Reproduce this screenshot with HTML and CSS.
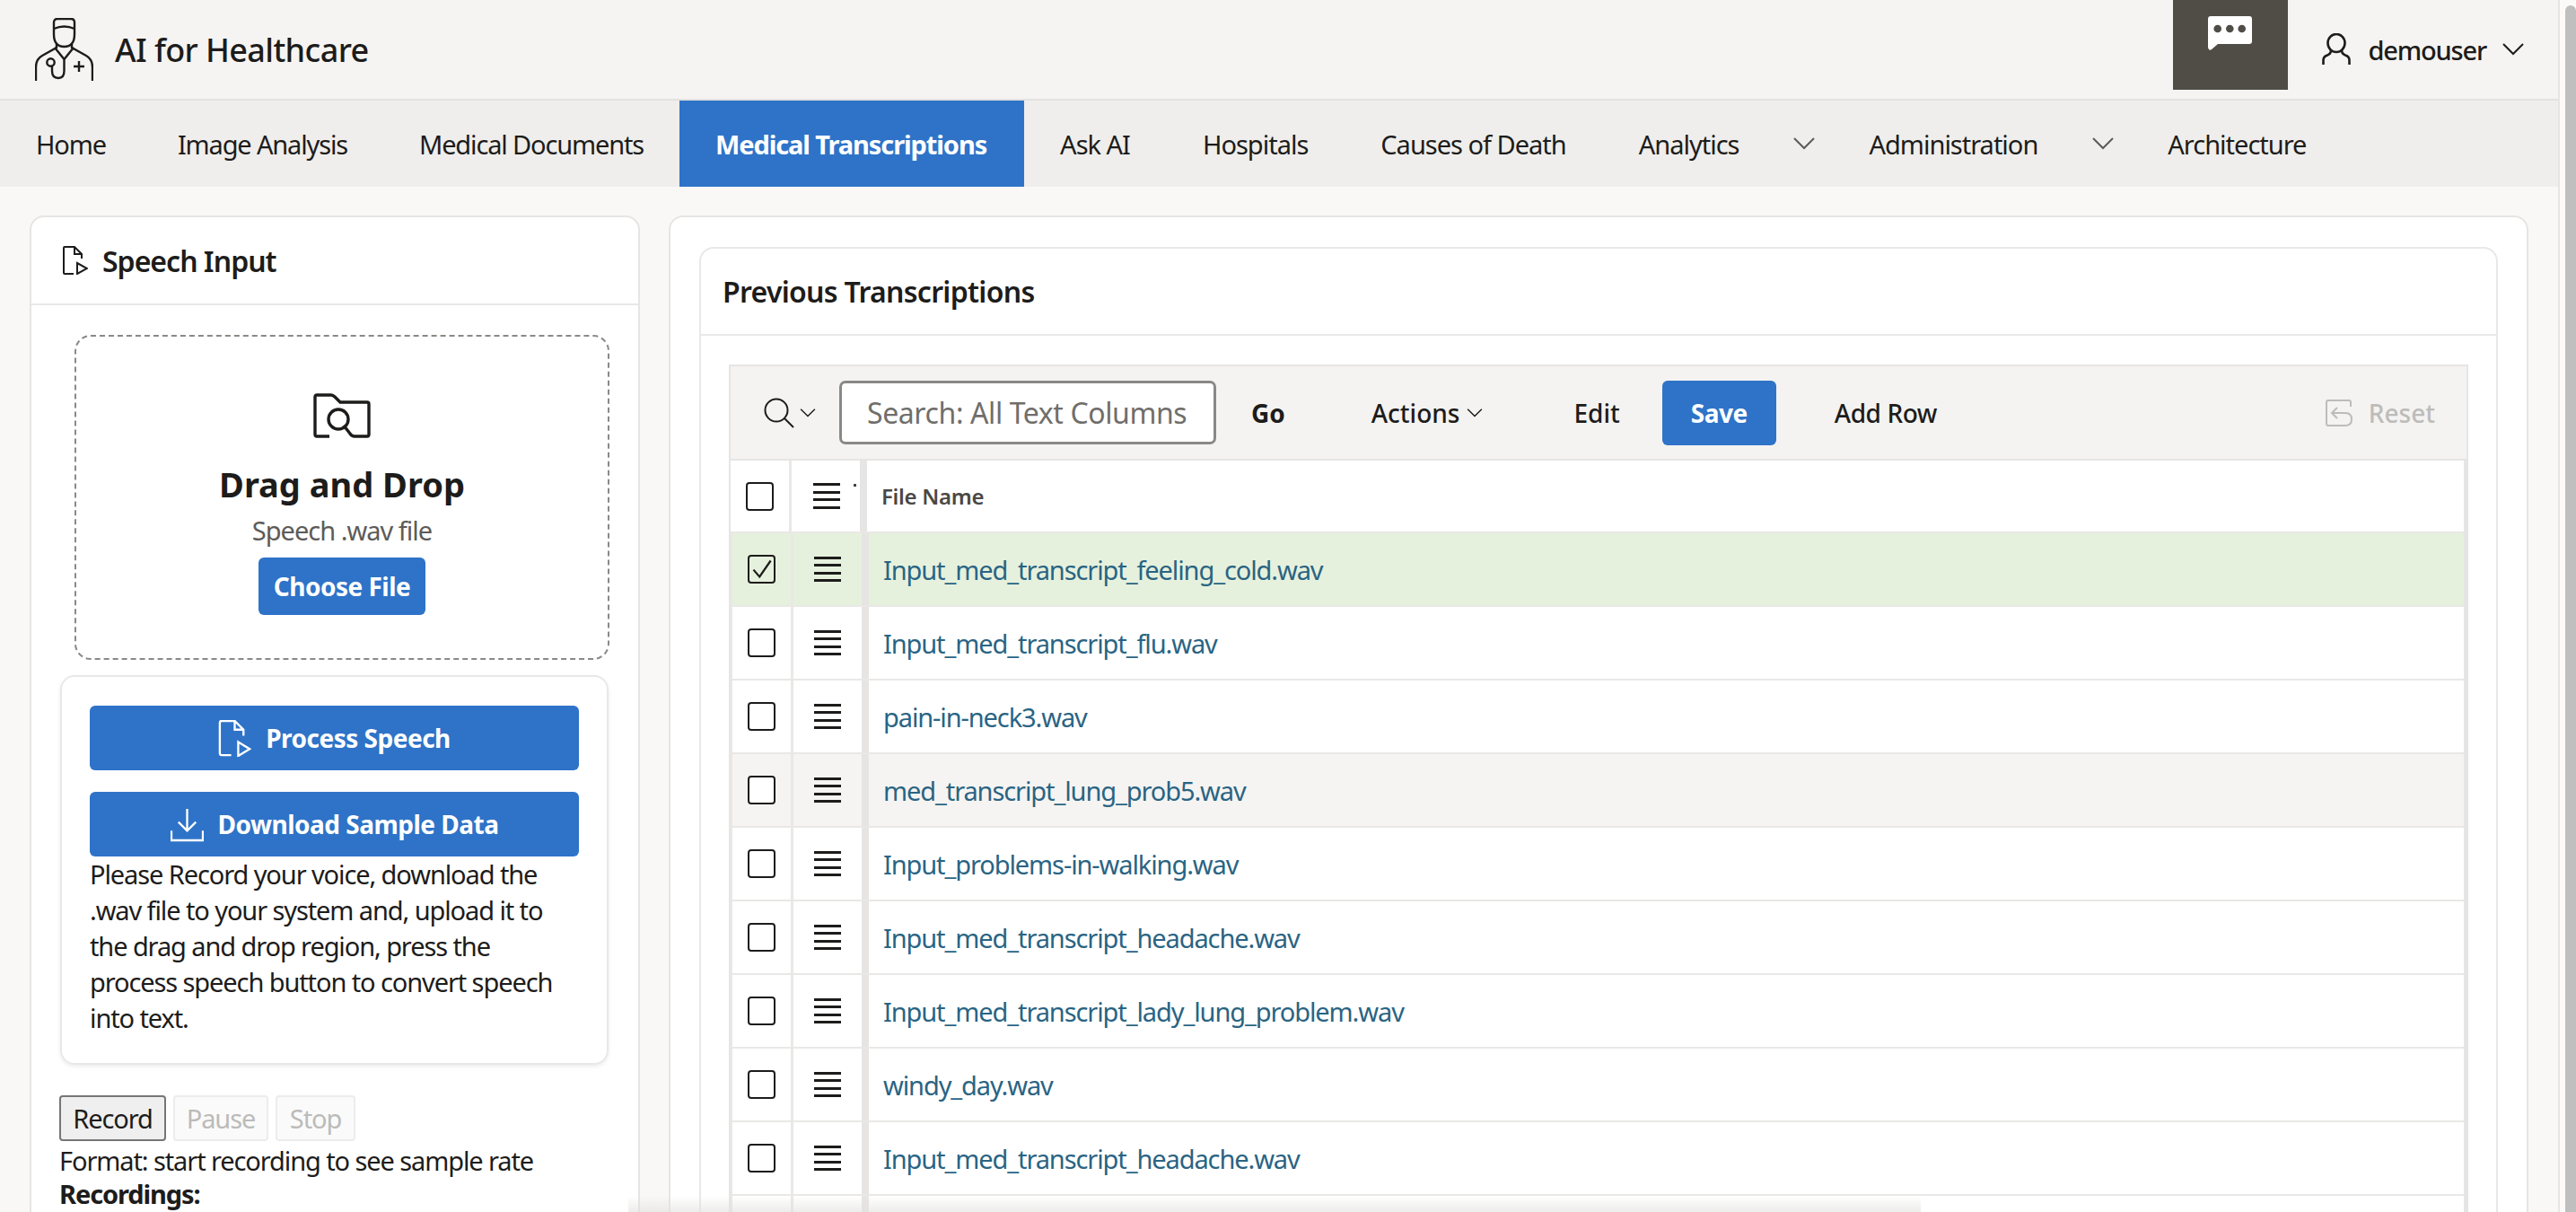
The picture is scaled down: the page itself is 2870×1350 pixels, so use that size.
FILE: index.html
```html
<!DOCTYPE html>
<html lang="en">
<head>
    <meta charset="UTF-8">
    <meta name="viewport" content="width=device-width, initial-scale=1.0">
    <title>AI for Healthcare</title>
    <link rel="stylesheet" href="styles.css">
</head>
<body>
    <div class="page">
        <div class="main">
            <header class="top-bar">
                <div class="brand">
                    <svg class="logo" viewBox="0 0 65 70" fill="none" stroke="#1d1c1b" stroke-width="2.4">
                        <path d="M21 14V5Q21 1 25 1H40Q44 1 44 5V14"/>
                        <path d="M21 12Q32.5 7 44 12M21 14V18Q21 32 32.5 32Q44 32 44 18V14"/>
                        <path d="M24 29V33L8 42Q1 46 1 55V70M41 29V33L57 42Q64 46 64 55V70"/>
                        <path d="M22 33L32.5 46L43 33M32.5 46V59Q32.5 67 26 67Q19 67 19 59V54"/>
                        <circle cx="17.5" cy="49.5" r="4.2"/>
                        <path d="M49 48V60M43 54H55"/>
                    </svg>
                    <span class="brand-name">AI for Healthcare</span>
                </div>
                <div class="top-actions">
                    <div class="chat-btn">
                        <svg viewBox="0 0 49 38" class="chat-icon">
                            <path d="M3 0H46Q49 0 49 3V28Q49 31 46 31H11L4 37Q1 39 0 35V3Q0 0 3 0Z" fill="#fff"/>
                            <circle cx="10.7" cy="14" r="4.3" fill="#504d47"/>
                            <circle cx="24.3" cy="14" r="4.3" fill="#504d47"/>
                            <circle cx="37.7" cy="14" r="4.3" fill="#504d47"/>
                        </svg>
                    </div>
                    <div class="user-menu">
                        <svg class="user-icon" viewBox="0 0 32 36" fill="none" stroke="#1d1c1b" stroke-width="2.6">
                            <ellipse cx="16" cy="11" rx="9.5" ry="10"/>
                            <path d="M10 19Q10 23 6 24.5Q1.5 26 1.5 30V35M22 19Q22 23 26 24.5Q30.5 26 30.5 30V35"/>
                        </svg>
                        <span class="user-name">demouser</span>
                        <svg class="chevron chevron-user" viewBox="0 0 24 14"><path d="M1 1L12 12L23 1"/></svg>
                    </div>
                </div>
            </header>

            <nav class="nav-bar">
                <a class="nav-item">Home</a>
                <a class="nav-item">Image Analysis</a>
                <a class="nav-item">Medical Documents</a>
                <a class="nav-item active">Medical Transcriptions</a>
                <a class="nav-item">Ask AI</a>
                <a class="nav-item">Hospitals</a>
                <a class="nav-item">Causes of Death</a>
                <a class="nav-item has-menu">Analytics</a>
                <span class="nav-toggle"><svg class="chevron" viewBox="0 0 24 14"><path d="M1 1L12 12L23 1"/></svg></span>
                <a class="nav-item has-menu">Administration</a>
                <span class="nav-toggle"><svg class="chevron" viewBox="0 0 24 14"><path d="M1 1L12 12L23 1"/></svg></span>
                <a class="nav-item">Architecture</a>
            </nav>

            <div class="content">
                <section class="card side-card">
                    <div class="side-head">
                        <svg class="file-play dark" viewBox="0 0 28 32" fill="none" stroke="currentColor" stroke-width="2">
                            <path d="M12 31H2Q1 31 1 30V2Q1 1 2 1H13L21 9V14M13 1V9H21"/>
                            <path d="M16 19L27 25L16 31Z"/>
                        </svg>
                        <h2>Speech Input</h2>
                    </div>
                    <div class="side-body">
                        <div class="drop-zone">
                            <svg class="folder-icon" viewBox="0 0 64 50" fill="none" stroke="#1d1c1b" stroke-width="3.4">
                                <path d="M18 48H4Q2 48 2 46V4Q2 2 4 2H20Q22 2 24 4L30 10H60Q62 10 62 12V46Q62 48 60 48H46Q43 48 41 45L34 36"/>
                                <circle cx="28" cy="29" r="11"/>
                            </svg>
                            <div class="drop-title">Drag and Drop</div>
                            <div class="drop-sub">Speech .wav file</div>
                            <button class="btn btn-primary choose-btn">Choose File</button>
                        </div>
                        <div class="process-box">
                            <button class="btn btn-primary wide-btn">
                                <svg class="btn-icon" viewBox="0 0 36 42" fill="none" stroke="#fff" stroke-width="2.4">
                                    <path d="M14 40H3Q1 40 1 38V3Q1 1 3 1H18L28 11V18M18 1V11H28"/>
                                    <path d="M22 25L35 33L22 41Z"/>
                                </svg>
                                Process Speech
                            </button>
                            <button class="btn btn-primary wide-btn">
                                <svg class="btn-icon" viewBox="0 0 38 38" fill="none" stroke="#fff" stroke-width="2.4">
                                    <path d="M19 1V26M9 16L19 26L29 16"/>
                                    <path d="M1 26V37H37V26"/>
                                </svg>
                                Download Sample Data
                            </button>
                            <p class="help-text">Please Record your voice, download the .wav file to your system and, upload it to the drag and drop region, press the process speech button to convert speech into text.</p>
                        </div>
                        <div class="recorder">
                            <div class="rec-controls">
                                <button class="rec-btn rec-record">Record</button>
                                <button class="rec-btn rec-pause" disabled>Pause</button>
                                <button class="rec-btn rec-stop" disabled>Stop</button>
                            </div>
                            <div class="rec-format">Format: start recording to see sample rate</div>
                            <div class="rec-title">Recordings:</div>
                        </div>
                    </div>
                </section>

                <section class="card report-card">
                    <div class="inner-card">
                        <h2 class="inner-head">Previous Transcriptions</h2>
                        <div class="grid-wrap">
                            <div class="toolbar">
                                <svg class="search-icon" viewBox="0 0 34 34" fill="none" stroke="#1d1c1b" stroke-width="2">
                                    <circle cx="14" cy="14" r="12.5"/>
                                    <path d="M23 23L33 33"/>
                                </svg>
                                <svg class="chevron chevron-small" viewBox="0 0 24 14"><path d="M1 1L12 12L23 1"/></svg>
                                <input class="search-input" type="text" placeholder="Search: All Text Columns">
                                <button class="tool-btn go-btn">Go</button>
                                <button class="tool-btn actions-btn">Actions<svg class="chevron chevron-small" viewBox="0 0 24 14"><path d="M1 1L12 12L23 1"/></svg></button>
                                <button class="tool-btn edit-btn">Edit</button>
                                <button class="btn btn-primary save-btn">Save</button>
                                <button class="tool-btn add-btn">Add Row</button>
                                <div class="reset">
                                    <svg class="reset-icon" viewBox="0 0 30 30" fill="none" stroke="#bdbcba" stroke-width="2">
                                        <path d="M28 8V3Q28 1 26 1H3Q1 1 1 3V27Q1 29 3 29H22Q29 29 29 22Q29 15 22 15H7M13 9L7 15L13 21"/>
                                    </svg>
                                    <span>Reset</span>
                                </div>
                            </div>
                            <div class="grid" id="grid">
                                <div class="grid-row head-row">
                                    <div class="cell check-cell"><span class="checkbox"></span></div>
                                    <div class="cell handle-cell"><span class="handle"><i></i><i></i><i></i><i></i></span><b class="handle-dot"></b></div>
                                    <div class="cell name-cell">File Name</div>
                                </div>
                                <div class="grid-row selected">
                                    <div class="cell check-cell"><span class="checkbox"><svg viewBox="0 0 24 24" fill="none" stroke="#1d1c1b" stroke-width="2"><path d="M4 13L10 20L21 4"/></svg></span></div>
                                    <div class="cell handle-cell"><span class="handle"><i></i><i></i><i></i><i></i></span></div>
                                    <div class="cell name-cell"><a>Input_med_transcript_feeling_cold.wav</a></div>
                                </div>
                                <div class="grid-row">
                                    <div class="cell check-cell"><span class="checkbox"></span></div>
                                    <div class="cell handle-cell"><span class="handle"><i></i><i></i><i></i><i></i></span></div>
                                    <div class="cell name-cell"><a>Input_med_transcript_flu.wav</a></div>
                                </div>
                                <div class="grid-row">
                                    <div class="cell check-cell"><span class="checkbox"></span></div>
                                    <div class="cell handle-cell"><span class="handle"><i></i><i></i><i></i><i></i></span></div>
                                    <div class="cell name-cell"><a>pain-in-neck3.wav</a></div>
                                </div>
                                <div class="grid-row hovered">
                                    <div class="cell check-cell"><span class="checkbox"></span></div>
                                    <div class="cell handle-cell"><span class="handle"><i></i><i></i><i></i><i></i></span></div>
                                    <div class="cell name-cell"><a>med_transcript_lung_prob5.wav</a></div>
                                </div>
                                <div class="grid-row">
                                    <div class="cell check-cell"><span class="checkbox"></span></div>
                                    <div class="cell handle-cell"><span class="handle"><i></i><i></i><i></i><i></i></span></div>
                                    <div class="cell name-cell"><a>Input_problems-in-walking.wav</a></div>
                                </div>
                                <div class="grid-row">
                                    <div class="cell check-cell"><span class="checkbox"></span></div>
                                    <div class="cell handle-cell"><span class="handle"><i></i><i></i><i></i><i></i></span></div>
                                    <div class="cell name-cell"><a>Input_med_transcript_headache.wav</a></div>
                                </div>
                                <div class="grid-row">
                                    <div class="cell check-cell"><span class="checkbox"></span></div>
                                    <div class="cell handle-cell"><span class="handle"><i></i><i></i><i></i><i></i></span></div>
                                    <div class="cell name-cell"><a>Input_med_transcript_lady_lung_problem.wav</a></div>
                                </div>
                                <div class="grid-row">
                                    <div class="cell check-cell"><span class="checkbox"></span></div>
                                    <div class="cell handle-cell"><span class="handle"><i></i><i></i><i></i><i></i></span></div>
                                    <div class="cell name-cell"><a>windy_day.wav</a></div>
                                </div>
                                <div class="grid-row">
                                    <div class="cell check-cell"><span class="checkbox"></span></div>
                                    <div class="cell handle-cell"><span class="handle"><i></i><i></i><i></i><i></i></span></div>
                                    <div class="cell name-cell"><a>Input_med_transcript_headache.wav</a></div>
                                </div>
                                <div class="grid-row">
                                    <div class="cell check-cell"></div>
                                    <div class="cell handle-cell"></div>
                                    <div class="cell name-cell"></div>
                                </div>
                            </div>
                        </div>
                    </div>
                </section>
            </div>
        </div>
        <div class="gutter"><div class="scroll-thumb"></div></div>
    </div>
    <div class="bottom-fade"></div>
</body>
</html>
```

FILE: styles.css
```css
* {
    box-sizing: border-box;
}
html, body {
    margin: 0;
    height: 1350px;
    overflow: hidden;
}
body {
    font-family: "Noto Sans", "Open Sans", sans-serif;
    background: #f9f8f6;
    color: #1d1c1b;
    letter-spacing: -1.1px;
}
h2 {
    margin: 0;
}
button {
    font-family: inherit;
    cursor: pointer;
}
.page {
    display: flex;
    height: 1350px;
}
.main {
    width: 2850px;
    flex: none;
}
.gutter {
    flex: 1;
    display: flex;
    padding-left: 6px;
    padding-top: 6px;
    background: #fbfaf8;
    border-left: 2px solid #e6e5e3;
}
.scroll-thumb {
    flex: 1;
    background: #bfbfbf;
    border-radius: 6px 6px 0 0;
}
.bottom-fade {
    position: absolute;
    left: 700px;
    width: 1440px;
    bottom: 0;
    height: 18px;
    background: linear-gradient(rgba(225, 224, 222, 0), rgba(225, 224, 222, 0.6));
}

/* top bar */
.top-bar {
    height: 112px;
    background: #f5f4f2;
    border-bottom: 2px solid #e3e2e0;
    display: flex;
    justify-content: space-between;
    padding-left: 39px;
}
.brand {
    display: flex;
    align-items: center;
    gap: 24px;
}
.logo {
    width: 65px;
    height: 70px;
}
.brand-name {
    font-size: 36px;
    font-weight: 500;
    letter-spacing: -0.6px;
}
.top-actions {
    display: flex;
    align-items: flex-start;
}
.chat-btn {
    width: 128px;
    height: 100px;
    margin-right: 38px;
    background: #504d47;
    display: flex;
    justify-content: center;
    padding-top: 18px;
}
.chat-icon {
    width: 49px;
    height: 38px;
}
.user-menu {
    display: flex;
    align-items: center;
    height: 110px;
    padding-right: 38px;
}
.user-icon {
    width: 32px;
    height: 36px;
    margin-right: 20px;
}
.user-name {
    font-size: 29px;
    font-weight: 500;
    letter-spacing: -1.2px;
    margin-right: 18px;
}
.chevron {
    width: 24px;
    height: 14px;
    fill: none;
    stroke: #1d1c1b;
    stroke-width: 2;
}

/* nav */
.nav-bar {
    height: 96px;
    background: #efeeec;
    display: flex;
    align-items: stretch;
}
.nav-item {
    display: flex;
    align-items: center;
    padding: 0 40px;
    font-size: 29px;
    letter-spacing: -1.15px;
    color: #1d1c1b;
}
.nav-item.active {
    background: #2e73c8;
    color: #fff;
    font-weight: 700;
    letter-spacing: -1.1px;
    padding: 0 41.5px 0 40px;
}
.nav-item.active ~ .nav-item {
    letter-spacing: -1px;
    padding: 0 40.5px;
}
.nav-toggle {
    display: flex;
    align-items: center;
    width: 64px;
    justify-content: center;
}
.nav-toggle .chevron {
    stroke: #5d5b58;
}

/* layout */
.content {
    display: flex;
    gap: 32px;
    padding: 32px 33px 0;
    height: 1142px;
    overflow: hidden;
}
.card {
    background: #fff;
    border: 2px solid #e6e5e3;
    border-radius: 16px;
}
.side-card {
    width: 680px;
    flex: none;
    height: 1300px;
}
.side-head {
    height: 98px;
    display: flex;
    align-items: center;
    gap: 16px;
    padding-left: 35px;
    border-bottom: 2px solid #e9e8e6;
}
.side-head h2 {
    font-size: 32px;
    font-weight: 600;
    letter-spacing: -1px;
}
.file-play.dark {
    width: 28px;
    height: 32px;
    color: #1d1c1b;
}
.side-body {
    padding: 33px 32px 0 32px;
}
.drop-zone {
    margin: 0 0 17px 16px;
    height: 362px;
    border: 2px dashed #8b8986;
    border-radius: 18px;
    display: flex;
    flex-direction: column;
    align-items: center;
    padding-top: 63px;
}
.folder-icon {
    width: 64px;
    height: 50px;
}
.drop-title {
    font-size: 38px;
    font-weight: 700;
    line-height: 50px;
    margin-top: 26px;
    letter-spacing: 0;
}
.drop-sub {
    font-size: 29px;
    line-height: 40px;
    color: #5d5b58;
    margin-top: 7px;
    margin-bottom: 10px;
    letter-spacing: -1px;
}
.btn {
    border: none;
    border-radius: 6px;
    color: #fff;
    font-weight: 700;
    letter-spacing: -0.5px;
}
.btn-primary {
    background: #2e73c8;
}
.choose-btn {
    width: 186px;
    height: 64px;
    font-size: 28px;
}
.process-box {
    border: 2px solid #e9e8e6;
    border-radius: 16px;
    box-shadow: 0 2px 4px rgba(0, 0, 0, 0.08);
    height: 434px;
    margin-bottom: 34px;
    padding: 32px 31px;
    margin-right: 1px;
}
.wide-btn {
    width: 545px;
    height: 72px;
    font-size: 28px;
    display: flex;
    align-items: center;
    justify-content: center;
    gap: 16px;
    margin-bottom: 24px;
}
.wide-btn + .wide-btn {
    margin-bottom: 0;
}
.btn-icon {
    width: 37px;
    height: 41px;
}
.help-text {
    margin: 0;
    font-size: 29px;
    line-height: 40px;
}
.recorder {
    margin-left: -1px;
}
.rec-controls {
    display: flex;
    gap: 8px;
    margin-bottom: 2px;
}
.rec-btn {
    height: 51px;
    padding: 0;
    font-size: 29px;
    letter-spacing: -1.1px;
    color: #1d1c1b;
    background: #efefef;
    border: 2px solid #767676;
    border-radius: 4px;
}
.rec-record {
    width: 119px;
}
.rec-pause {
    width: 106px;
}
.rec-stop {
    width: 89px;
}
.rec-btn:disabled {
    color: #bcbbb9;
    background: #fafafa;
    border-color: #ececec;
}
.rec-format {
    font-size: 29px;
    line-height: 40px;
}
.rec-title {
    font-size: 29px;
    line-height: 34px;
    font-weight: 700;
}

/* report */
.report-card {
    flex: 1;
    height: 1300px;
    padding: 33px 32px 0;
}
.inner-card {
    border: 2px solid #e9e8e6;
    border-radius: 16px;
    height: 1300px;
}
.inner-head {
    height: 97px;
    display: flex;
    align-items: center;
    padding-left: 24px;
    font-size: 32px;
    font-weight: 600;
    letter-spacing: -0.7px;
    border-bottom: 2px solid #e9e8e6;
}
.grid-wrap {
    padding: 32px 31px 0;
}
.toolbar {
    height: 107px;
    background: #f4f3f1;
    border: 2px solid #e6e5e3;
    display: flex;
    align-items: center;
    padding-left: 37px;
    padding-right: 35px;
    font-size: 28px;
    letter-spacing: 0;
}
.search-icon {
    width: 34px;
    height: 34px;
    flex: none;
}
.chevron-small {
    width: 18px;
    height: 10px;
    margin-left: 6px;
    flex: none;
}
.actions-btn .chevron-small {
    margin-left: 8px;
}
.search-input {
    width: 420px;
    height: 71px;
    margin-left: 26px;
    padding: 0 28px;
    font: 32px "Noto Sans", sans-serif;
    letter-spacing: -0.4px;
    border: 3px solid #8a8885;
    border-radius: 7px;
    background: #fff;
}
.search-input::placeholder {
    color: #706e6b;
    opacity: 1;
}
.tool-btn {
    background: none;
    border: none;
    padding: 0;
    font-size: 28px;
    font-weight: 500;
    letter-spacing: 0;
    color: #1d1c1b;
    display: flex;
    align-items: center;
}
.go-btn {
    margin-left: 39px;
    font-weight: 700;
}
.actions-btn {
    margin-left: 96px;
}
.edit-btn {
    margin-left: 101px;
}
.save-btn {
    width: 127px;
    height: 72px;
    margin-left: 47px;
    font-size: 28px;
}
.add-btn {
    margin-left: 65px;
    letter-spacing: -0.4px;
}
.reset {
    margin-left: auto;
    display: flex;
    align-items: center;
    gap: 18px;
    color: #bdbcba;
    font-weight: 500;
}
.reset-icon {
    width: 30px;
    height: 30px;
}
.grid {
    border-right: 5px solid #e6e5e3;
    border-left: 2px solid #e6e5e3;
}
.grid-row {
    display: flex;
    height: 82px;
    border-bottom: 2px solid #e9e8e6;
    border-left: 2px solid #e9e8e6;
    background: #fff;
}
.grid-row.head-row {
    height: 81px;
    border-left: none;
}
.grid-row.selected {
    background: #e6f1dd;
}
.grid-row.hovered {
    background: #f5f4f2;
}
.cell {
    display: flex;
    align-items: center;
}
.check-cell {
    width: 68px;
    justify-content: center;
    border-right: 3px solid #e9e8e6;
    flex: none;
}
.handle-cell {
    width: 84px;
    flex: none;
    justify-content: center;
    border-right: 8px solid #e6e5e3;
    position: relative;
}
.head-row .handle {
    margin-left: 2px;
}
.name-cell {
    flex: 1;
    padding-left: 16px;
    font-size: 29px;
}
.head-row .name-cell {
    font-size: 24px;
    font-weight: 600;
    letter-spacing: -0.3px;
    color: #4a4845;
}
.name-cell a {
    color: #2a6483;
}
.checkbox {
    display: block;
    width: 31px;
    height: 32px;
    border: 2.5px solid #1d1c1b;
    border-radius: 4px;
    background: #fff;
}
.selected .checkbox {
    background: transparent;
}
.handle {
    display: flex;
    flex-direction: column;
    gap: 5.5px;
    width: 30px;
}
.handle i {
    display: block;
    height: 3px;
    background: #1d1c1b;
}
.handle-dot {
    position: absolute;
    right: 4px;
    top: 26px;
    width: 3px;
    height: 3px;
    background: #444;
}
```
